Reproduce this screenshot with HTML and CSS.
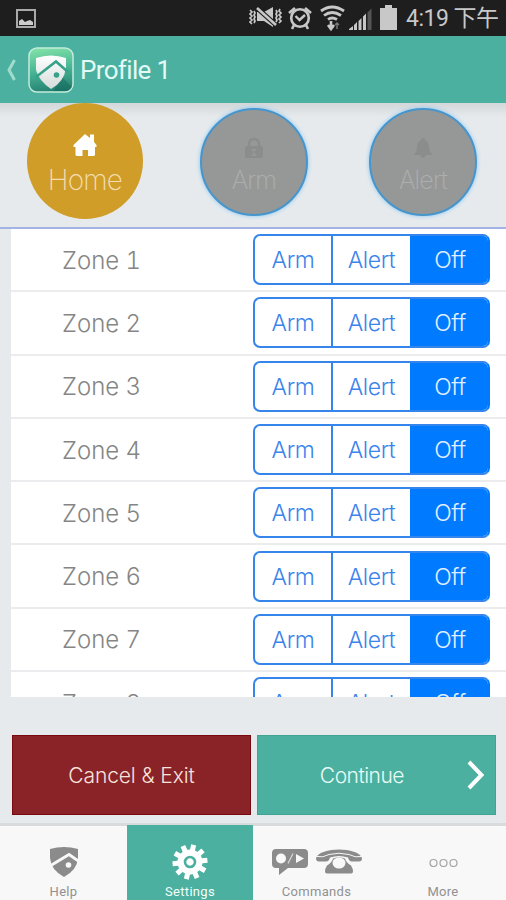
FILE: index.html
```html
<!DOCTYPE html>
<html lang="en">
<head>
<meta charset="utf-8">
<title>Profile 1</title>
<link rel="stylesheet" href="styles.css">
</head>
<body>
<div class="app">
  <div class="status">
    <svg class="shot" width="20" height="19" viewBox="0 0 20 19"><rect x="1" y="1" width="18" height="17" fill="none" stroke="#aaa" stroke-width="2"/><path d="M3 16v-4l3-2 3 3 2-1 3-1 3 2v3z" fill="#ccc"/></svg>
    <svg class="sys" width="150" height="30" viewBox="0 0 150 30">
      <g fill="#c8c8c8"><path d="M8 9h7l9-5v20l-9-6H8z"/>
        <path d="M100 27h4v-4l-4 3zM105 22l3-3v8h-3zM109.500 18l3-3v12h-3zM114 13.500l3-3V27h-3z"/><path d="M118.500 9.500l4-4V27h-4z" fill="#555"/>
        <path d="M131 5h5V2h7v3h5v22h-17z"/></g>
      <path d="M8 5l19 17" stroke="#1e1e1e" stroke-width="5"/>
      <g fill="none" stroke="#c8c8c8" stroke-width="1.7">
        <path d="M1 7l2 2-2 2 2 2-2 2 2 2-2 2 2 2M5 8l1 2-1 2 1 2-1 2 1 2-1 2M27 7l1 2-1 2 1 2-1 2 1 2-1 2M31 6l-1 2 2 2-2 2 2 2-2 2 2 2-2 2"/>
        <path d="M8 5l19 17" stroke-width="2.600"/>
        <circle cx="51" cy="15" r="8.800" stroke-width="2.600"/><path d="M46.500 13l4 4 5.500-5" stroke-width="2.400"/><path d="M40 10l6-5M62 10l-6-5M45 22l-2 4M57 22l2 4" stroke-width="2.600"/>
        <path d="M72 8q11-8 23 0M75 12.500q8-6 17 0M79 16.500q4-3 9 0" stroke-width="2.800"/>
        <path d="M82 18v7M79 22l3 4 3-4" stroke-width="2.600"/><path d="M88 26v-6M86 22l2-2 2 2" stroke="#777" stroke-width="1.500"/>
      </g>
    </svg>
    <span class="clock">4:19 下午</span>
  </div>
  <div class="header">
    <svg class="back" width="10" height="22" viewBox="0 0 10 22"><path d="M8.500 1L3 11l5.500 10" fill="none" stroke="#a0dccd" stroke-width="3"/></svg>
    <svg class="logo" width="46" height="46" viewBox="0 0 46 46">
      <defs><linearGradient id="g" x1=".4" y1="0" x2=".55" y2="1"><stop offset="0" stop-color="#7fe0a6"/><stop offset=".5" stop-color="#48b596"/><stop offset="1" stop-color="#237f70"/></linearGradient>
      <linearGradient id="h" x1="0" y1="0" x2="0" y2="1"><stop offset="0" stop-color="#fff"/><stop offset="1" stop-color="#d5dcda"/></linearGradient></defs>
      <rect x="1" y="1" width="44" height="44" rx="8" fill="url(#g)" stroke="#c3eadc" stroke-width="1.500"/>
      <path d="M34 30l10 10-4 4H25z" fill="#0d5f54" opacity=".4"/>
      <path d="M8 11q15-5 30 0v10Q36 35 23 42 11 34 8 23z" fill="url(#h)"/>
      <path d="M8 30l20-15.500L40 25" fill="none" stroke="#37a18a" stroke-width="2.600"/>
      <circle cx="28.500" cy="28" r="2.800" fill="#37a18a"/>
    </svg>
    <span class="title">Profile 1</span>
  </div>
  <div class="modes">
    <div class="mode home">
      <svg width="24" height="24" viewBox="0 0 24 24"><path d="M12 1l5 4V1.500h4V9l2.500 3v2H22v7.500q0 1.500-1.500 1.500H15v-6H9.500v6H4q-1.500 0-1.500-1.500V14H.5v-2z" fill="#fff"/></svg>
      <span>Home</span></div>
    <div class="mode arm">
      <svg width="22" height="22" viewBox="0 0 22 22"><path d="M6 10V7a5 5 0 0 1 10 0v3" fill="none" stroke="#8b8d8c" stroke-width="2.500"/><rect x="2" y="9" width="18" height="12" rx="2" fill="#8b8d8c"/><path d="M8 12h6l-3 3 3 4H8l3-4z" fill="#969898"/></svg>
      <span>Arm</span></div>
    <div class="mode alert">
      <svg width="22" height="22" viewBox="0 0 22 22"><path d="M11 1q2 0 2 2 4 2 4 7 0 5 3 7v1h-6q-1 3-3 3t-3-3H2v-1q3-2 3-7 0-5 4-7 0-2 2-2z" fill="#8b8d8c"/></svg>
      <span>Alert</span></div>
  </div>
  <div class="list">
    <div class="row"><span class="zone">Zone 1</span><div class="seg"><b>Arm</b><b>Alert</b><b class="on">Off</b></div></div>
    <div class="row"><span class="zone">Zone 2</span><div class="seg"><b>Arm</b><b>Alert</b><b class="on">Off</b></div></div>
    <div class="row"><span class="zone">Zone 3</span><div class="seg"><b>Arm</b><b>Alert</b><b class="on">Off</b></div></div>
    <div class="row"><span class="zone">Zone 4</span><div class="seg"><b>Arm</b><b>Alert</b><b class="on">Off</b></div></div>
    <div class="row"><span class="zone">Zone 5</span><div class="seg"><b>Arm</b><b>Alert</b><b class="on">Off</b></div></div>
    <div class="row"><span class="zone">Zone 6</span><div class="seg"><b>Arm</b><b>Alert</b><b class="on">Off</b></div></div>
    <div class="row"><span class="zone">Zone 7</span><div class="seg"><b>Arm</b><b>Alert</b><b class="on">Off</b></div></div>
    <div class="row"><span class="zone">Zone 8</span><div class="seg"><b>Arm</b><b>Alert</b><b class="on">Off</b></div></div>
  </div>
  <div class="actions">
    <div class="btn cancel"><span>Cancel &amp; Exit</span></div>
    <div class="btn continue"><span>Continue</span><svg class="chev" width="18" height="30" viewBox="0 0 18 30"><path d="M2 2l12.500 13L2 28" fill="none" stroke="#fff" stroke-width="4"/></svg></div>
  </div>
  <div class="tabs">
    <div class="tab">
      <div class="ico"><svg width="28" height="30" viewBox="0 0 28 30"><path d="M0 2q14-4 28 0v9q-1 12-14 19Q1 23 0 11z" fill="#8b8b8b"/><path d="M0 19L19 7.500l10 7" fill="none" stroke="#f8f8f8" stroke-width="2.800"/><circle cx="18.500" cy="18" r="2.800" fill="#f8f8f8"/></svg></div>
      <span>Help</span></div>
    <div class="tab active">
      <div class="ico"><svg width="36" height="36" viewBox="-18 -18 36 36"><circle r="12.500" fill="#fff"/><g stroke="#fff" stroke-width="5"><path d="M0-17.500V17.500" transform="rotate(12)"/><path d="M0-17.500V17.500" transform="rotate(48)"/><path d="M0-17.500V17.500" transform="rotate(84)"/><path d="M0-17.500V17.500" transform="rotate(120)"/><path d="M0-17.500V17.500" transform="rotate(156)"/></g><circle r="5" fill="#fff" stroke="#4bb09f" stroke-width="2.600"/></svg></div>
      <span>Settings</span></div>
    <div class="tab">
      <div class="ico"><svg width="90" height="26" viewBox="0 0 90 26"><path d="M4 0h28q4 0 4 4v11q0 4-4 4H16l-9 7V19H4q-4 0-4-4V4q0-4 4-4z" fill="#8b8b8b"/><circle cx="9" cy="9.500" r="5" fill="#f8f8f8"/><path d="M24 5v9l8-4.500z" fill="#f8f8f8"/><path d="M16 14.500l5-10" stroke="#d5d5d5" stroke-width="1.300"/><path d="M61 9.500q6-2 12 0 1 4 6 7 2 3 2 6 0 2-3 2H56q-3 0-3-2 0-3 2-6 5-3 6-7z" fill="#8b8b8b"/><path d="M44 9C48-2.500 86-2.500 90 9q0 3.500-3 3.500h-7q-3 0-4-4-9-3-18 0-1 4-4 4h-7q-3 0-3-3.500z" fill="#8b8b8b"/><path d="M44 7.500q7 1.500 13-2 10-2.500 20 0 6 3.500 13 2" fill="none" stroke="#f8f8f8" stroke-width="1"/><ellipse cx="67" cy="14" rx="6.500" ry="5.500" fill="#f8f8f8"/></svg></div>
      <span>Commands</span></div>
    <div class="tab">
      <div class="ico"><svg width="29" height="10" viewBox="0 0 29 10"><g fill="none" stroke="#a4a4a4" stroke-width="1.200"><circle cx="4.500" cy="6" r="3.500"/><circle cx="14.500" cy="6" r="3.500"/><circle cx="24.500" cy="6" r="3.500"/></g></svg></div>
      <span>More</span></div>
  </div>
</div>
</body>
</html>
```
FILE: styles.css
```css
* { box-sizing: border-box; }
body { margin: 0; }
.app { width: 506px; height: 900px; overflow: hidden; display: flex; flex-direction: column; background: #e6eaed; font-family: Inter, "Liberation Sans", sans-serif; }
.status { height: 36px; flex: none; background: #1e1e1e; display: flex; align-items: flex-start; padding-left: 16px; }
.shot { margin-top: 9px; }
.sys { margin-left: 213px; margin-top: 3px; }
.clock { margin-left: 7px; font: 23px/38px Roboto, "Noto Sans CJK TC", sans-serif; color: #c8c8c8; white-space: nowrap; letter-spacing: -0.5px; }
.header { height: 67px; flex: none; background: #4bb09f; display: flex; align-items: center; padding-left: 6px; }
.logo { margin-left: 12px; }
.title { margin-left: 6px; font: 26px/60px Roboto, sans-serif; color: #e4faf5; white-space: nowrap; letter-spacing: -0.65px; }
.modes { height: 126px; flex: none; display: flex; align-items: flex-start; padding-left: 27px; border-bottom: 2px solid #a3b3e6; background: linear-gradient(#d2d7da, #e6eaed 14px); }
.mode { border-radius: 50%; display: flex; flex-direction: column; align-items: center; font-size: 28px; font-weight: 200; line-height: 34px; letter-spacing: -0.8px; }
.home { width: 116px; height: 116px; background: #d09d28; color: #f3dcae; padding-top: 30px; }
.home span { margin-top: 6px; }
.arm, .alert { width: 108px; height: 108px; margin-top: 5px; padding-top: 27px; background: #969898; border: 2px solid #4695cc; box-shadow: 0 0 4px #7fc4f2; color: #acafaf; font-size: 25px; }
.arm { margin-left: 57px; }
.alert { margin-left: 61px; }
.arm span, .alert span { margin-top: 4px; }
.list { height: 468px; flex: none; overflow: hidden; margin-left: 11px; background: #fff; }
.row { height: 63.3px; display: flex; align-items: center; padding: 0 16px 0 51px; border-bottom: 2px solid #ececee; justify-content: space-between; }
.zone { padding-top: 1px; font-size: 24px; font-weight: 300; color: #858585; white-space: nowrap; font-variant-numeric: tabular-nums; }
.seg { display: flex; width: 237px; height: 51px; border: 2px solid #3585ec; border-right-color: #007aff; border-radius: 7px; overflow: hidden; }
.seg b { width: 76px; display: flex; align-items: center; justify-content: center; padding-top: 1px; font-weight: 300; font-size: 23px; color: #3d83ec; letter-spacing: -0.4px; }
.seg b + b { width: 79px; border-left: 2px solid #3585ec; }
.seg b.on { width: 78px; border-color: #007aff; background: #007aff; color: #e2f0ff; }
.actions { display: flex; gap: 6px; padding: 38px 10px 0 12px; height: 126px; flex: none; }
.btn { width: 239px; height: 80px; display: flex; align-items: center; justify-content: center; font-size: 21px; font-weight: 300; white-space: nowrap; }
.btn span { padding-top: 1px; letter-spacing: -0.1px; }
.cancel { background: #892328; border: 1px solid #7a080f; color: #f8e2dc; }
.continue { background: #4bb09f; border: 1px solid #3fa592; color: #e8fbf7; justify-content: flex-end; padding-right: 10px; }
.btn.continue span { letter-spacing: -0.5px; }
.chev { margin-left: 63px; }
.tabs { display: flex; height: 77px; flex: none; background: linear-gradient(#d8dadb 0 3px, #f8f8f8 3px); }
.tab { width: 127px; display: flex; flex-direction: column; align-items: center; color: #919191; font: 13px/16px Roboto, sans-serif; letter-spacing: 0.3px; }
.active { background: #4bb09f; color: #f2fffc; width: 126px; margin-top: 2px; }
.ico { height: 61px; padding-top: 16px; display: flex; align-items: center; justify-content: center; flex: none; }
.active .ico { height: 59px; padding-top: 14px; }
.tab:nth-child(4) { width: 126px; }
```
